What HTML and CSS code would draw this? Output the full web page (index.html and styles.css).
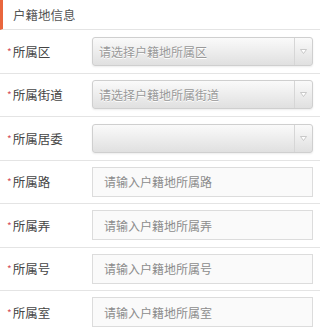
FILE: index.html
```html
<html lang="zh-CN">
<head>
    <meta charset="UTF-8">
    <meta name="viewport" content="width=device-width, initial-scale=1.0">
    <title>户籍地信息</title>
    <link rel="stylesheet" href="styles.css">
</head>
<body>
    <div class="section">
        <div class="section-title">户籍地信息</div>

        <div class="form-row">
            <label class="form-label"><span class="req">*</span>所属区</label>
            <div class="select-box">
                <span class="select-text">请选择户籍地所属区</span>
                <span class="select-arrow">
                    <svg width="7" height="5" viewBox="0 0 7 5"><polygon points="0.5,0.5 6.5,0.5 3.5,4.5" fill="#fff" stroke="#bdbdbd" stroke-width="0.8"/></svg>
                </span>
            </div>
        </div>

        <div class="form-row">
            <label class="form-label"><span class="req">*</span>所属街道</label>
            <div class="select-box">
                <span class="select-text">请选择户籍地所属街道</span>
                <span class="select-arrow">
                    <svg width="7" height="5" viewBox="0 0 7 5"><polygon points="0.5,0.5 6.5,0.5 3.5,4.5" fill="#fff" stroke="#bdbdbd" stroke-width="0.8"/></svg>
                </span>
            </div>
        </div>

        <div class="form-row">
            <label class="form-label"><span class="req">*</span>所属居委</label>
            <div class="select-box">
                <span class="select-text"></span>
                <span class="select-arrow">
                    <svg width="7" height="5" viewBox="0 0 7 5"><polygon points="0.5,0.5 6.5,0.5 3.5,4.5" fill="#fff" stroke="#bdbdbd" stroke-width="0.8"/></svg>
                </span>
            </div>
        </div>

        <div class="form-row">
            <label class="form-label"><span class="req">*</span>所属路</label>
            <input class="text-input" type="text" placeholder="请输入户籍地所属路">
        </div>

        <div class="form-row">
            <label class="form-label"><span class="req">*</span>所属弄</label>
            <input class="text-input" type="text" placeholder="请输入户籍地所属弄">
        </div>

        <div class="form-row">
            <label class="form-label"><span class="req">*</span>所属号</label>
            <input class="text-input" type="text" placeholder="请输入户籍地所属号">
        </div>

        <div class="form-row">
            <label class="form-label"><span class="req">*</span>所属室</label>
            <input class="text-input" type="text" placeholder="请输入户籍地所属室">
        </div>
    </div>

    <!-- next section starts just below the fold -->
    <div class="section">
        <div class="section-title"></div>
    </div>
</body>
</html>
```

FILE: styles.css
```css
* {
    margin: 0;
    padding: 0;
    box-sizing: border-box;
}

body {
    font-family: "Noto Sans CJK SC", "Liberation Sans", sans-serif;
    font-size: 12px;
    color: #444;
    background-color: #fff;
}

.section-title {
    height: 30px;
    line-height: 29px;
    padding-left: 10px;
    border-left: 3px solid #e9663d;
    border-bottom: 1px solid #e4e4e4;
    color: #555;
    font-size: 12.5px;
}

.form-row {
    display: flex;
    align-items: center;
    height: 43.5px;
    padding-right: 7px;
    border-bottom: 1px solid #e4e4e4;
}

.form-label {
    width: 92px;
    flex-shrink: 0;
    padding-left: 7px;
    font-size: 12.5px;
    color: #444;
}

.req {
    color: #d5505a;
    font-size: 10px;
    margin-right: 1px;
    position: relative;
    top: -1px;
}

.select-box {
    flex: 1;
    display: flex;
    height: 29px;
    border: 1px solid #cfcfcf;
    border-radius: 3px;
    background: linear-gradient(#fafafa, #e0e0e0);
    box-shadow: 0 1px 2px rgba(0, 0, 0, 0.08);
}

.select-text {
    flex: 1;
    line-height: 27px;
    padding-left: 6px;
    color: #999;
    font-size: 12px;
    text-shadow: 0 1px 0 #fff;
}

.select-arrow {
    width: 18px;
    border-left: 1px solid #d6d6d6;
    display: flex;
    align-items: center;
    justify-content: center;
}

.text-input {
    flex: 1;
    min-width: 0;
    height: 30px;
    border: 1px solid #dcdcdc;
    background-color: #fafafa;
    padding-left: 11px;
    font-family: inherit;
    font-size: 12px;
    color: #444;
    outline: none;
}

.text-input::placeholder {
    color: #8c8c8c;
}
```
